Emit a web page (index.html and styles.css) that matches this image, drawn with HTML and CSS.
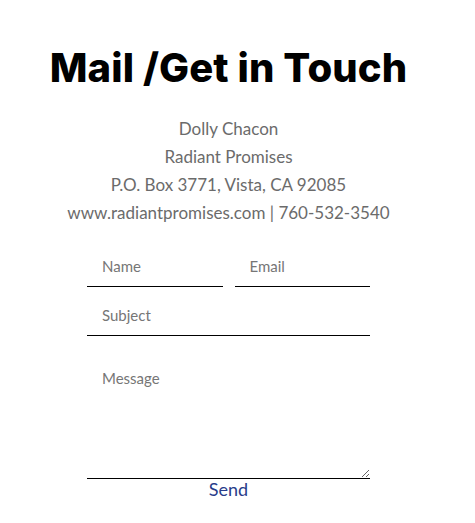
FILE: index.html
```html
<!DOCTYPE html>
<html>
<head>
<meta charset="utf-8">
<link rel="stylesheet" href="styles.css">
</head>
<body>
<div class="page">
  <h1 class="title">Mail /Get in Touch</h1>
  <div class="address">
    <p>Dolly Chacon</p>
    <p>Radiant Promises</p>
    <p>P.O. Box 3771, Vista, CA 92085</p>
    <p>www.radiantpromises.com | 760-532-3540</p>
  </div>
  <form class="form">
    <div class="row">
      <input class="field" type="text" placeholder="Name">
      <input class="field" type="email" placeholder="Email">
    </div>
    <input class="field" type="text" placeholder="Subject">
    <textarea class="field message" placeholder="Message"></textarea>
    <button class="send" type="button">Send</button>
  </form>
</div>
</body>
</html>
```
FILE: styles.css
```css
* { box-sizing: border-box; }
body {
  margin: 0;
  background: #fff;
  font-family: "Lato", "Open Sans", sans-serif;
}
.page {
  width: 457px;
  display: flex;
  flex-direction: column;
  align-items: center;
  padding-top: 44px;
}
.title {
  margin: 0;
  font-family: "Inter", "Noto Sans", sans-serif;
  font-weight: 800;
  font-size: 40px;
  line-height: 48px;
  color: #000;
  letter-spacing: 0.1px;
}
.address {
  margin-top: 23px;
  text-align: center;
  color: #6b6b6b;
  font-size: 17px;
  line-height: 28px;
}
.address p { margin: 0; }
.form {
  margin-top: 11px;
  width: 283px;
  display: flex;
  flex-direction: column;
}
.row {
  display: flex;
  gap: 12px;
}
.row .field { flex: 1; min-width: 0; }
.field {
  display: block;
  width: 100%;
  height: 49px;
  border: none;
  border-bottom: 1px solid #000;
  padding: 7px 15px 0;
  font-family: "Lato", "Open Sans", sans-serif;
  font-size: 15px;
  color: #000;
  background: transparent;
  outline: none;
}
.field::placeholder { color: #767676; }
.message {
  height: 143px;
  padding: 34px 15px 8px;
  line-height: 17px;
  resize: vertical;
}
.send {
  align-self: center;
  border: none;
  background: none;
  padding: 0;
  margin-top: 0;
  font-family: "Lato", "Open Sans", sans-serif;
  font-size: 18px;
  line-height: 20px;
  color: #283c8a;
  cursor: pointer;
}
```
